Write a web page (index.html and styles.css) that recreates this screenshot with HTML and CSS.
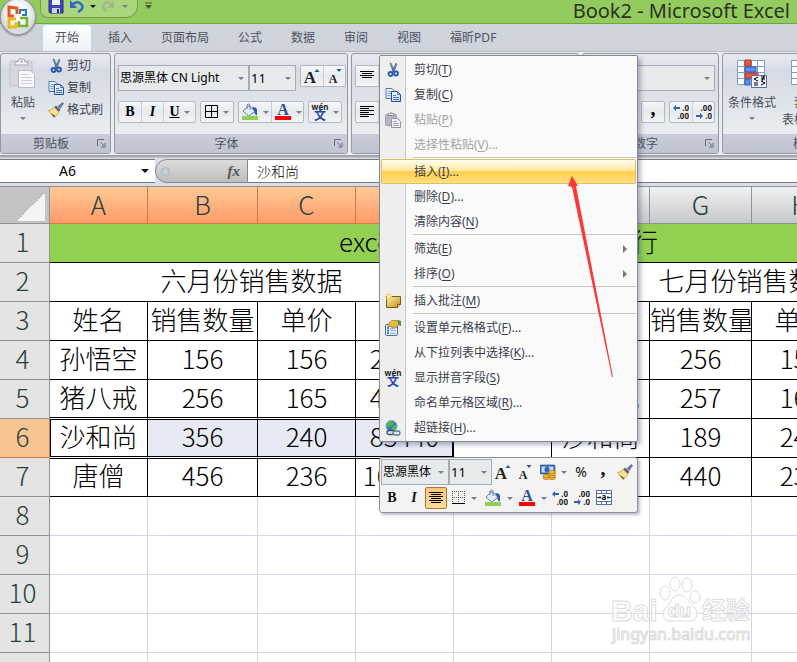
FILE: index.html
```html
<!DOCTYPE html>
<html lang="zh-CN">
<head>
  <meta charset="UTF-8">
  <title>Book2 - Microsoft Excel</title>
  <link rel="stylesheet" href="styles.css">
</head>
<body>

<svg class="gradients" width="0" height="0" aria-hidden="true">
  <linearGradient id="paper" x1="0" y1="0" x2="1" y2="1"><stop offset="0" stop-color="#fff"/><stop offset="1" stop-color="#b9cdf0"/></linearGradient>
  <linearGradient id="note" x1="0" y1="0" x2="1" y2="1"><stop offset="0" stop-color="#fff6b5"/><stop offset="1" stop-color="#bd8a18"/></linearGradient>
</svg>

<!-- shared icons -->
<svg class="symbols" aria-hidden="true">
  <symbol id="cut" viewBox="0 0 16 16">
    <path d="M5 1l1 0 4 9-2 0zM11 1l1 1-3 8-2-1z" fill="#6f87a3" stroke="#3c5674" stroke-width=".5"/>
    <circle cx="5.500" cy="12" r="2" fill="none" stroke="#2857b5" stroke-width="1.800"/>
    <circle cx="11" cy="11.500" r="2" fill="none" stroke="#2857b5" stroke-width="1.800"/>
  </symbol>
  <symbol id="copy" viewBox="0 0 16 16">
    <path d="M1 1.500h6l2 2v8H1z" fill="url(#paper)" stroke="#4a78c0"/>
    <path d="M2.500 4.500h4M2.500 6.500h4M2.500 8.500h3" stroke="#7fa5dc"/>
    <path d="M6.500 4.500h6l3 3v7h-9z" fill="url(#paper)" stroke="#244f9e"/>
    <path d="M12.500 4.500v3h3M8 8.500h3M8 10.500h6M8 12.500h6" fill="none" stroke="#4a78c0"/>
  </symbol>
  <symbol id="paste-gray" viewBox="0 0 16 16">
    <rect x=".5" y="2.500" width="11" height="11" rx="1" fill="#b9b4c2" stroke="#a09aab"/>
    <path d="M3 3.500h6v-2H7.500L6 .5 4.500 1.500H3z" fill="#e7e4ea" stroke="#8f8a9a"/>
    <path d="M6.500 6.500h6l3 3v6h-9z" fill="#f2f1f5" stroke="#9893a3"/>
    <path d="M8 9.500h4M8 11.500h6M8 13.500h6" stroke="#aaa6b5"/>
  </symbol>
  <symbol id="paste-big" viewBox="0 0 28 32">
    <rect x="1" y="3" width="22" height="25" rx="2" fill="#d9d6df" stroke="#c2becb"/>
    <path d="M6 7V4h3l1-3h5l1 3h3v3z" fill="#f4f3f6" stroke="#aaa6b4"/>
    <circle cx="12.500" cy="3.500" r="1.200" fill="#b4b0bd"/>
    <path d="M9.500 12.500h12l4 4v13h-16z" fill="#f8f8fb" stroke="#bcb9c9"/>
    <path d="M12 16.500h8M12 19.500h11M12 22.500h11M12 25.500h11" stroke="#cfcdd9"/>
  </symbol>
  <symbol id="brush" viewBox="0 0 16 16">
    <path d="M15.500 1.500l-1-1-4.500 4 2 2z" fill="#6b7fb0" stroke="#3a4a78" stroke-width=".6"/>
    <path d="M8 3.500l4.500 4.500-2 2L6 5.500z" fill="#5b5f78"/>
    <path d="M6 5l5 5c-1 2-3 4-5 5.500L.5 8.500C3 8 5 7 6 5z" fill="#f3dd7a" stroke="#a88b2f" stroke-width=".6"/>
    <path d="M3 9l4 4M5 7.500l4.500 4.500" stroke="#fff6c4"/>
    <path d="M6 15.500l-3.500-4.500 5 3z" fill="#7d5a14"/>
  </symbol>
  <symbol id="bucket" viewBox="0 0 18 18">
    <path d="M2 8l6-5.500 6 6-6.500 4.500z" fill="#e5edf7" stroke="#667fa0"/>
    <path d="M6 6V2q1.500-2 3 0v5" fill="none" stroke="#667fa0"/>
    <path d="M11 4q5 0 5 3v5.500q-3-1-2.500-4z" fill="#2d5aa8"/>
    <path d="M1 13h16v4H1z" fill="#92d050"/>
  </symbol>
  <symbol id="font-color" viewBox="0 0 18 18">
    <text x="9" y="12" class="glyph-a">A</text>
    <path d="M1 13h16v4H1z" fill="#f00"/>
  </symbol>
  <symbol id="wen" viewBox="0 0 18 18">
    <text x="9" y="7" class="glyph-wen">wén</text>
    <text x="9" y="17" class="glyph-zi">文</text>
  </symbol>
  <symbol id="grow" viewBox="0 0 18 18">
    <text x="7" y="16" class="glyph-grow">A</text>
    <path d="M11.500 5L14 2l2.500 3z" fill="#2a52a5"/>
  </symbol>
  <symbol id="shrink" viewBox="0 0 18 18">
    <text x="7" y="16" class="glyph-shrink">A</text>
    <path d="M10.500 2h5L13 5z" fill="#2a52a5"/>
  </symbol>
  <symbol id="borders" viewBox="0 0 14 14">
    <path d="M.5 .5h12v12H.5zM6.500 .5v12M.5 6.500h12" fill="none" stroke="#000"/>
  </symbol>
  <symbol id="bottom-border" viewBox="0 0 14 14">
    <path d="M0 .5h13M0 6.500h13M.5 0v12M6.500 0v12M12.500 0v12" fill="none" stroke="#555" stroke-dasharray="1 1"/>
    <path d="M0 12.500h13" stroke="#000"/>
  </symbol>
  <symbol id="center" viewBox="0 0 14 14">
    <path d="M0 1.500h14M2 3.500h10M0 5.500h14M2 7.500h10M0 9.500h14M2 11.500h10" stroke="#000"/>
  </symbol>
  <symbol id="top" viewBox="0 0 14 14">
    <path d="M0 2.500h14M2 4.500h10M0 6.500h14M2 8.500h10" stroke="#000"/>
  </symbol>
  <symbol id="left" viewBox="0 0 14 14">
    <path d="M0 1.500h14M0 3.500h9M0 5.500h14M0 7.500h9M0 9.500h14M0 11.500h9" stroke="#000"/>
  </symbol>
  <symbol id="dec-more" viewBox="0 0 16 16">
    <path d="M0 4l3-3v2h4v2H3v2z" fill="#2d63c8"/>
    <text x="16" y="7" class="glyph-dec">.0</text><text x="16" y="15" class="glyph-dec">.00</text>
  </symbol>
  <symbol id="dec-less" viewBox="0 0 16 16">
    <path d="M7 12l-3-3v2H0v2h4v2z" fill="#2d63c8"/>
    <text x="16" y="7" class="glyph-dec">.00</text><text x="16" y="15" class="glyph-dec">.0</text>
  </symbol>
  <symbol id="merge" viewBox="0 0 16 16">
    <rect x=".5" y=".5" width="15" height="14" fill="#fff" stroke="#5272a8"/>
    <path d="M1 3.500h14M5.500 1v3M10.500 1v3M1 11.500h14M5.500 11v4M10.500 11v4" stroke="#5272a8"/>
    <path d="M1 7.500h4M11 7.500h4M4 6v3M12 6v3" stroke="#234"/>
    <text x="8" y="10" class="glyph-merge">a</text>
  </symbol>
  <symbol id="currency" viewBox="0 0 16 16">
    <rect x="0" y="1" width="15" height="9" rx="1" fill="#3465b4" stroke="#21488e" stroke-width=".6"/>
    <rect x="1.500" y="2.500" width="12" height="6" fill="#c9dcf6"/><ellipse cx="7" cy="5.500" rx="2.500" ry="3" fill="#3465b4"/>
    <g fill="#f6c33c" stroke="#a66e0b" stroke-width=".7"><ellipse cx="12" cy="14" rx="3.500" ry="1.500"/><ellipse cx="12" cy="12" rx="3.500" ry="1.500"/><ellipse cx="12" cy="10" rx="3.500" ry="1.500"/><ellipse cx="12" cy="8" rx="3.500" ry="1.500"/><ellipse cx="6" cy="14" rx="3" ry="1.500"/><ellipse cx="6" cy="12" rx="3" ry="1.500"/></g>
  </symbol>
  <symbol id="comment" viewBox="0 0 16 16">
    <path d="M1.500 3.500h14v8l-3 3h-11z" fill="url(#note)" stroke="#7b5b10"/>
    <path d="M12.500 14.500l0-3 3 0" fill="#f7e28a" stroke="#7b5b10"/>
    <path d="M3.500 0v7M0 3.500h7M1 1l5 5M6 1L1 6" stroke="#f2c522"/><circle cx="3.500" cy="3.500" r="1.500" fill="#fffbd0"/>
  </symbol>
  <symbol id="format" viewBox="0 0 16 16">
    <rect x=".5" y="4.500" width="12" height="11" rx="1" fill="#e4edfa" stroke="#4c6d9e"/>
    <path d="M2 8h2M2 10.500h2M2 13h2" stroke="#2c5cb0" stroke-width="1.500"/><path d="M5 8.500h5M5 10.500h6M5 13.500h6" stroke="#9aaecb"/>
    <path d="M3 4l4-3.500h6l1 4-3 3.500-2-1-2 1-1-2-3 1z" fill="#e7b84c" stroke="#8c6518" stroke-width=".6"/>
    <path d="M13 0l3 1v5l-2.500-1z" fill="#4f8f4a"/>
  </symbol>
  <symbol id="link" viewBox="0 0 16 16">
    <circle cx="6.500" cy="6" r="5.500" fill="#3577cf" stroke="#8ea6c4"/>
    <path d="M3 2q3-2 5 0t-2 4-3 2-2-3zM8 6q3-2 4 0t-3 4-2-2z" fill="#4dbb45"/>
    <rect x="2" y="10.500" width="7" height="4" rx="2" fill="#dfe8f2" stroke="#33506f" stroke-width="1.300"/>
    <rect x="8" y="11" width="7" height="4" rx="2" fill="#dfe8f2" stroke="#5a7899" stroke-width="1.300"/>
  </symbol>
  <symbol id="cond" viewBox="0 0 30 28">
    <path d="M.5.500h27v24H.5z" fill="#fff" stroke="#7f9cc8"/>
    <path d="M7.500 1v24M14.500 1v24M20.500 1v24M1 6.500h27M1 12.500h27M1 18.500h27" stroke="#7f9cc8"/>
    <path d="M8 0h6v6H8zM8 13h13v5H8z" fill="#f2543d" stroke="#bd3424"/><path d="M8 7h11v5H8zM8 19h5v6H8z" fill="#5b8ff0" stroke="#2e57b5"/>
    <path d="M14.500 15.500h15v12h-15z" fill="#edf3fc" stroke="#5b7294"/>
    <path d="M21 17l-4 2 4 2M17 23h4M17 25h4M24 19h4M24 17h4M27 16l-2 5M24 21l4 2-4 2" fill="none" stroke="#000"/>
  </symbol>
  <symbol id="launcher" viewBox="0 0 9 9">
    <path d="M.5 7V.5H7M3.500 3.500l4 4M8 4v4H4" fill="none" stroke="#666d7a"/>
  </symbol>
</svg>

<div class="app">

  <header class="titlebar">
    <div class="quick-access">
      <button class="qa-btn" aria-label="保存">
        <svg width="16" height="16" viewBox="0 0 16 16"><path d="M1 0h13l1 1v13H2l-1-1z" fill="#3b46b5" stroke="#222c80"/><path d="M4 0h8v6H4z" fill="#eef1fb"/><path d="M4 9h8v5H4z" fill="#cfd4e6"/><path d="M9 10h2v4H9z" fill="#28318a"/></svg>
      </button>
      <button class="qa-btn" aria-label="撤消">
        <svg width="16" height="16" viewBox="0 0 16 16"><path d="M3 6q5-5 9-1t-3 8" fill="none" stroke="#3568c4" stroke-width="2.500"/><path d="M1 1v8h7z" fill="#3568c4"/></svg>
      </button>
      <i class="arrow dark"></i>
      <button class="qa-btn" aria-label="恢复">
        <svg width="16" height="16" viewBox="0 0 16 16"><path d="M11 6Q6 1 3 5t3 7" fill="none" stroke="#9fb98e" stroke-width="2.500"/><path d="M13 1v8H6z" fill="#9fb98e"/></svg>
      </button>
      <i class="arrow"></i>
    </div>
    <svg class="qa-more" width="7" height="8" viewBox="0 0 7 8"><path d="M0 1h7" stroke="#4a5a3c"/><path d="M0 3h7L3.500 7z" fill="#4a5a3c"/></svg>
    <h1>Book2 - Microsoft Excel</h1>
  </header>

  <button class="office-button" aria-label="Office 按钮">
    <svg width="24" height="24" viewBox="0 0 24 24" fill="none" stroke-width="3">
      <path d="M11 9V3L3 2v9h5" stroke="#e8571c"/><path d="M14 9V5h6v5h-4" stroke="#3277c8" stroke-width="2"/>
      <path d="M10 14H3v8h7v-5" stroke="#f2b51c"/><path d="M14 13h7v8h-8v-5" stroke="#72b62c" stroke-width="2.500"/>
    </svg>
  </button>

  <nav class="tabs">
    <button class="tab active">开始</button>
    <button class="tab">插入</button>
    <button class="tab">页面布局</button>
    <button class="tab">公式</button>
    <button class="tab">数据</button>
    <button class="tab">审阅</button>
    <button class="tab">视图</button>
    <button class="tab">福昕PDF</button>
  </nav>

  <div class="ribbon">
    <section class="group clipboard">
      <div class="group-body">
        <button class="big-btn"><svg width="28" height="32"><use href="#paste-big"/></svg>粘贴<i class="arrow"></i></button>
        <div class="small-btns">
          <button><svg width="16" height="16"><use href="#cut"/></svg>剪切</button>
          <button><svg width="16" height="16"><use href="#copy"/></svg>复制</button>
          <button><svg width="16" height="16"><use href="#brush"/></svg>格式刷</button>
        </div>
      </div>
      <div class="group-label"><span>剪贴板</span><svg width="9" height="9"><use href="#launcher"/></svg></div>
    </section>

    <section class="group font">
      <div class="group-body rows">
        <div class="row">
          <div class="combos">
            <span class="combo name"><select aria-label="字体"><option>思源黑体 CN Light</option></select></span>
            <span class="combo size"><select aria-label="字号"><option>11</option></select></span>
          </div>
          <div class="btn-set">
            <button aria-label="增大字号"><svg width="18" height="18"><use href="#grow"/></svg></button>
            <button aria-label="减小字号"><svg width="18" height="18"><use href="#shrink"/></svg></button>
          </div>
        </div>
        <div class="row">
          <div class="btn-set">
            <button class="b">B</button>
            <button class="i">I</button>
            <button class="u wide"><u>U</u><i class="arrow"></i></button>
          </div>
          <div class="btn-set">
            <button class="wide" aria-label="边框"><svg width="14" height="14"><use href="#borders"/></svg><i class="arrow"></i></button>
          </div>
          <div class="btn-set">
            <button class="wide" aria-label="填充颜色"><svg width="18" height="18"><use href="#bucket"/></svg><i class="arrow"></i></button>
            <button class="wide" aria-label="字体颜色"><svg width="18" height="18"><use href="#font-color"/></svg><i class="arrow"></i></button>
          </div>
          <div class="btn-set">
            <button class="wide" aria-label="拼音"><svg width="18" height="18"><use href="#wen"/></svg><i class="arrow"></i></button>
          </div>
        </div>
      </div>
      <div class="group-label"><span>字体</span><svg width="9" height="9"><use href="#launcher"/></svg></div>
    </section>

    <section class="group align">
      <div class="group-body rows">
        <div class="row">
          <div class="btn-set"><button aria-label="顶端对齐"><svg width="14" height="14"><use href="#top"/></svg></button><button class="on" aria-label="垂直居中"><svg width="14" height="14"><use href="#top"/></svg></button></div>
        </div>
        <div class="row">
          <div class="btn-set"><button aria-label="左对齐"><svg width="14" height="14"><use href="#left"/></svg></button><button class="on" aria-label="居中"><svg width="14" height="14"><use href="#center"/></svg></button></div>
        </div>
      </div>
      <div class="group-label"></div>
    </section>

    <section class="group number">
      <div class="group-body rows">
        <div class="row">
          <span class="combo format"><select aria-label="数字格式"><option></option></select></span>
        </div>
        <div class="row end">
          <div class="btn-set"><button class="comma">,</button></div>
          <div class="btn-set">
            <button aria-label="增加小数位数"><svg width="16" height="16"><use href="#dec-more"/></svg></button>
            <button aria-label="减少小数位数"><svg width="16" height="16"><use href="#dec-less"/></svg></button>
          </div>
        </div>
      </div>
      <div class="group-label"><span>数字</span><svg width="9" height="9"><use href="#launcher"/></svg></div>
    </section>

    <section class="group style">
      <div class="group-body">
        <button class="big-btn"><svg width="30" height="32"><use href="#cond"/></svg>条件格式<i class="arrow"></i></button>
        <button class="big-btn"><svg width="30" height="32"><use href="#cond"/></svg>套用<br>表格格式</button>
      </div>
      <div class="group-label"><span>样式</span></div>
    </section>
  </div>

  <div class="formula-bar">
    <div class="name-box"><input type="text" value="A6" aria-label="名称框"><i class="arrow dark"></i></div>
    <div class="fx"><i class="knob"></i><button>fx</button></div>
    <input class="formula" type="text" value="沙和尚" aria-label="编辑栏">
  </div>

  <main class="sheet">
    <table>
      <colgroup><col class="c-head"><col class="c"><col class="c-b"><col class="c"><col class="c"><col class="c"><col class="c"><col class="c-g"><col class="c"><col class="c"></colgroup>
      <thead>
        <tr><th class="corner"></th><th class="sel">A</th><th class="sel">B</th><th class="sel">C</th><th class="sel">D</th><th>E</th><th>F</th><th>G</th><th>H</th><th>I</th></tr>
      </thead>
      <tbody>
        <tr class="data"><th>1</th><td colspan="9" class="title">excel中如何快速插入一整行</td></tr>
        <tr class="data"><th>2</th><td colspan="4">六月份销售数据</td><td></td><td colspan="4">七月份销售数据</td></tr>
        <tr class="data"><th>3</th><td>姓名</td><td>销售数量</td><td>单价</td><td>总价</td><td></td><td>姓名</td><td>销售数量</td><td>单价</td><td>总价</td></tr>
        <tr class="data"><th>4</th><td>孙悟空</td><td>156</td><td>156</td><td>24336</td><td></td><td>孙悟空</td><td>256</td><td>156</td><td>39936</td></tr>
        <tr class="data before"><th>5</th><td>猪八戒</td><td>256</td><td>165</td><td>42240</td><td></td><td>猪八戒</td><td>257</td><td>165</td><td>42405</td></tr>
        <tr class="data current"><th>6</th><td class="active">沙和尚</td><td class="picked">356</td><td class="picked">240</td><td class="picked last">85440</td><td></td><td>沙和尚</td><td>189</td><td>240</td><td>45360</td></tr>
        <tr class="data after"><th>7</th><td>唐僧</td><td>456</td><td>236</td><td>107616</td><td></td><td>唐僧</td><td>440</td><td>236</td><td>103840</td></tr>
        <tr><th>8</th><td></td><td></td><td></td><td></td><td></td><td></td><td></td><td></td><td></td></tr>
        <tr><th>9</th><td></td><td></td><td></td><td></td><td></td><td></td><td></td><td></td><td></td></tr>
        <tr><th>10</th><td></td><td></td><td></td><td></td><td></td><td></td><td></td><td></td><td></td></tr>
        <tr><th>11</th><td></td><td></td><td></td><td></td><td></td><td></td><td></td><td></td><td></td></tr>
        <tr><th></th><td></td><td></td><td></td><td></td><td></td><td></td><td></td><td></td><td></td></tr>
      </tbody>
    </table>
  </main>

  <!-- right click menu -->
  <div class="context-menu">
    <button><span class="ico"><svg width="16" height="16"><use href="#cut"/></svg></span>剪切(<u>T</u>)</button>
    <button><span class="ico"><svg width="16" height="16"><use href="#copy"/></svg></span>复制(<u>C</u>)</button>
    <button disabled><span class="ico"><svg width="16" height="16"><use href="#paste-gray"/></svg></span>粘贴(<u>P</u>)</button>
    <button disabled><span class="ico"></span>选择性粘贴(<u>V</u>)...</button>
    <hr>
    <button class="hot"><span class="ico"></span>插入(<u>I</u>)...</button>
    <button><span class="ico"></span>删除(<u>D</u>)...</button>
    <button><span class="ico"></span>清除内容(<u>N</u>)</button>
    <hr>
    <button class="sub"><span class="ico"></span>筛选(<u>E</u>)</button>
    <button class="sub"><span class="ico"></span>排序(<u>O</u>)</button>
    <hr>
    <button><span class="ico"><svg width="16" height="16"><use href="#comment"/></svg></span>插入批注(<u>M</u>)</button>
    <hr>
    <button><span class="ico"><svg width="16" height="16"><use href="#format"/></svg></span>设置单元格格式(<u>F</u>)...</button>
    <button><span class="ico"></span>从下拉列表中选择(<u>K</u>)...</button>
    <button><span class="ico"><svg width="18" height="18"><use href="#wen"/></svg></span>显示拼音字段(<u>S</u>)</button>
    <button><span class="ico"></span>命名单元格区域(<u>R</u>)...</button>
    <button><span class="ico"><svg width="16" height="16"><use href="#link"/></svg></span>超链接(<u>H</u>)...</button>
  </div>

  <!-- floating format bar -->
  <div class="mini-bar">
    <div class="mini-row">
      <div class="combos">
        <span class="combo mini-name"><select aria-label="字体"><option>思源黑体</option></select></span>
        <span class="combo mini-size"><select aria-label="字号"><option>11</option></select></span>
      </div>
      <button aria-label="增大字号"><svg width="18" height="18"><use href="#grow"/></svg></button>
      <button aria-label="减小字号"><svg width="18" height="18"><use href="#shrink"/></svg></button>
      <button class="wide" aria-label="会计数字格式"><svg width="16" height="16"><use href="#currency"/></svg><i class="arrow"></i></button>
      <button class="percent">%</button>
      <button class="comma">,</button>
      <button aria-label="格式刷"><svg width="16" height="16"><use href="#brush"/></svg></button>
    </div>
    <div class="mini-row">
      <button class="b">B</button>
      <button class="i">I</button>
      <button class="on" aria-label="居中"><svg width="14" height="14"><use href="#center"/></svg></button>
      <button class="wide" aria-label="边框"><svg width="14" height="14"><use href="#bottom-border"/></svg><i class="arrow"></i></button>
      <button class="wide" aria-label="填充颜色"><svg width="18" height="18"><use href="#bucket"/></svg><i class="arrow"></i></button>
      <button class="wide" aria-label="字体颜色"><svg width="18" height="18"><use href="#font-color"/></svg><i class="arrow"></i></button>
      <button aria-label="增加小数位数"><svg width="16" height="16"><use href="#dec-more"/></svg></button>
      <button aria-label="减少小数位数"><svg width="16" height="16"><use href="#dec-less"/></svg></button>
      <button aria-label="合并后居中"><svg width="16" height="16"><use href="#merge"/></svg></button>
    </div>
  </div>

  <svg class="pointer" width="46" height="202" viewBox="0 0 46 202"><path d="M4 0L10 10 8 10 45 201 44 201 4 11 0 10z" fill="#f93a37"/></svg>

  <svg class="watermark" width="150" height="70" viewBox="0 0 150 70">
    <g fill="#fff" fill-opacity=".7" stroke="#dcdcdc">
      <text x="0" y="45" class="wm-big">Bai</text>
      <ellipse cx="54" cy="17" rx="5" ry="7"/><ellipse cx="64" cy="8" rx="5" ry="7"/><ellipse cx="76" cy="9" rx="5" ry="7"/><ellipse cx="84" cy="21" rx="5" ry="6"/>
      <path d="M68 19q7 0 11 8 8 6 7 12-2 7-10 6H60q-8 0-8-7 0-5 6-10 4-9 10-9z"/>
      <text x="57" y="41" class="wm-du">du</text>
      <text x="91" y="43" class="wm-cn">经验</text>
      <text x="1" y="64" class="wm-url">jingyan.baidu.com</text>
    </g>
  </svg>

</div>

</body>
</html>
```
FILE: styles.css
```css
* {
	box-sizing: border-box;
}

body {
	margin: 0;
	background: #fff;
	color: #3b3f4c;
	font-family: "Noto Sans", "Noto Sans CJK SC", sans-serif;
	font-size: 12px;
	line-height: 16px;
}

button, input, select {
	font: inherit;
	color: inherit;
	border: 0;
	margin: 0;
	padding: 0;
	background: none;
}

svg {
	display: block;
	flex: none;
}

.gradients {
	position: absolute;
}

.symbols {
	display: none;
}

.app {
	position: relative;
	height: 100vh;
	overflow: hidden;
	display: flex;
	flex-direction: column;
	background: #cfd3dc;
}

/* small drop down triangle */
.arrow {
	flex: none;
	width: 0;
	height: 0;
	border: 3px solid transparent;
	border-top-color: #777d86;
	border-bottom: 0;
}

.arrow.dark {
	border-width: 4px 4px 0;
	border-top-color: #111;
}

/* Title bar */
.titlebar {
	flex: none;
	display: flex;
	height: 24px;
	background: #94cb5f;
	border-bottom: 1px solid #6fa53e;
}

.quick-access {
	display: flex;
	align-items: center;
	gap: 5px;
	width: 98px;
	height: 18px;
	margin-left: 40px;
	padding: 0 7px 4px;
	background: #a9d67d;
	border: 1px solid #739e4d;
	border-top: 0;
	border-radius: 0 0 12px 8px;
}

.quick-access .arrow {
	border-width: 3px 3px 0;
}

.qa-more {
	margin: 2px 7px;
}

.titlebar h1 {
	margin: 0 7px 0 auto;
	font-size: 20px;
	line-height: 21px;
	font-weight: 400;
	white-space: nowrap;
	color: #29331f;
}

/* Office button lies over title bar and tabs */
.office-button {
	position: absolute;
	left: 0;
	top: -2px;
	z-index: 2;
	width: 36px;
	height: 37px;
	display: flex;
	align-items: center;
	justify-content: center;
	border: 1px solid #8d939b;
	border-radius: 50%;
	background: radial-gradient(circle at 50% 40%, #fff 30%, #d5d8dc 65%, #f5f6f7);
	box-shadow: 0 1px 2px #777;
}

/* Tabs */
.tabs {
	flex: none;
	display: flex;
	align-items: flex-end;
	gap: 5px;
	height: 27px;
	padding-left: 43px;
}

.tab {
	height: 26px;
	padding: 0 12px;
	white-space: nowrap;
	color: #4d525d;
}

.tab.active {
	background: linear-gradient(#fff, #edf1f7);
	border-radius: 3px 3px 0 0;
	box-shadow: 0 0 0 1px #abe0e4;
}

/* Ribbon */
.ribbon {
	flex: none;
	display: flex;
	gap: 3px;
	height: 105px;
	padding: 1px 0;
	overflow: hidden;
	background: #e9edf2;
	border-top: 1px solid #b5bac2;
	border-bottom: 1px solid #9ca1a8;
}

.group {
	flex: none;
	display: flex;
	flex-direction: column;
	height: 101px;
	overflow: hidden;
	border: 1px solid #93979e;
	border-radius: 3px;
	background: linear-gradient(#e7eaf0 0, #dbdfe8 14px, #d4d9e3 15px, #e9eef1 80px);
}

.clipboard {
	width: 111px;
}

.font {
	width: 234px;
}

.align {
	width: 228px;
}

.number {
	width: 137px;
}

.style {
	width: 166px;
}

.group-body {
	flex: 1;
	display: flex;
	padding: 0 4px;
}

.group-label {
	display: flex;
	align-items: center;
	height: 19px;
	padding: 0 4px;
	background: linear-gradient(#c9cdd9, #bfc4d1);
	color: #4d525d;
}

.group-label span {
	flex: 1;
	text-align: center;
}

.big-btn {
	display: flex;
	flex-direction: column;
	align-items: center;
	padding: 4px 0 0;
	line-height: 17px;
	white-space: nowrap;
	color: #474b56;
}

.clipboard .big-btn {
	width: 36px;
}

.style .big-btn {
	width: 50px;
}

.style .group-body {
	gap: 4px;
}

.big-btn svg {
	margin-bottom: 4px;
}

.big-btn .arrow {
	margin-top: 6px;
}

.small-btns {
	display: flex;
	flex-direction: column;
	padding: 1px 0 0 7px;
}

.small-btns button {
	display: flex;
	align-items: center;
	gap: 3px;
	height: 22px;
	white-space: nowrap;
}

.group-body.rows {
	flex-direction: column;
	gap: 10px;
	padding: 11px 3px 0;
}

.row {
	display: flex;
	align-items: flex-start;
	gap: 4px;
	height: 26px;
}

.row.end {
	justify-content: flex-end;
}

.combos {
	display: flex;
}

.combo {
	position: relative;
	height: 26px;
	border: 1px solid #a3adb6;
	background: #e6eaeb;
	color: #000;
}

.combo::after {
	content: "";
	position: absolute;
	right: 4px;
	top: 11px;
	border: 3px solid transparent;
	border-top-color: #777d86;
	border-bottom: 0;
}

.combo select {
	appearance: none;
	width: 100%;
	height: 100%;
	padding-left: 1px;
	outline: 0;
}

.combo.name {
	width: 131px;
}

.combo.size {
	width: 47px;
}

.combo.size select, .combo.mini-size select {
	font-size: 13px;
}

.combo.format {
	width: 100%;
}

.btn-set {
	display: flex;
	height: 22px;
	border: 1px solid #b4b9c0;
	border-radius: 2px;
	background: linear-gradient(#f4f6f8, #e8ebee 50%, #f2f4f5);
}

.btn-set button {
	display: flex;
	align-items: center;
	justify-content: center;
	gap: 4px;
	width: 22px;
	color: #000;
}

.btn-set button + button {
	border-left: 1px solid #c9cdd2;
}

.btn-set button.wide {
	width: 32px;
}

.b, .i, .u {
	font-family: "Liberation Serif", serif;
	font-size: 14px;
	font-weight: 700;
}

.i {
	font-style: italic;
}

.btn-set button.on {
	background: #fbc567;
}

button.comma {
	font-family: "Liberation Serif", serif;
	font-size: 20px;
	font-weight: 700;
	line-height: 12px;
	padding-bottom: 8px;
}

.percent {
	font-size: 14px;
}

/* Letters inside the icons */
.glyph-a, .glyph-grow, .glyph-shrink {
	font-family: "Liberation Serif", serif;
	font-weight: 700;
	text-anchor: middle;
}

.glyph-a {
	font-size: 16px;
	fill: #2f508f;
}

.glyph-grow {
	font-size: 17px;
	fill: #222;
}

.glyph-shrink {
	font-size: 12px;
	fill: #222;
}

.glyph-wen {
	font-size: 8px;
	font-weight: 700;
	text-anchor: middle;
	fill: #222;
}

.glyph-zi {
	font-size: 12px;
	font-weight: 700;
	text-anchor: middle;
	fill: #2846b0;
}

.glyph-dec {
	font-size: 8px;
	font-weight: 700;
	text-anchor: end;
	fill: #222;
}

.glyph-merge {
	font-size: 8px;
	font-weight: 700;
	text-anchor: middle;
	fill: #000;
}

/* Formula bar */
.formula-bar {
	flex: none;
	display: flex;
	height: 31px;
	padding: 3px 0 3px;
	background: linear-gradient(#a9adb2 1px, #d9dde5 2px);
	border-bottom: 1px solid #8e9196;
}

.name-box {
	display: flex;
	align-items: center;
	width: 155px;
	padding-right: 6px;
	background: #fff;
	border: 1px solid #777b80;
	border-width: 1px 0;
}

.name-box input {
	flex: 1;
	min-width: 0;
	padding-right: 6px;
	text-align: center;
	font-size: 14px;
	color: #000;
}

.fx {
	display: flex;
	align-items: center;
	justify-content: space-between;
	width: 93px;
	padding: 0 7px 0 5px;
	border: 1px solid #85898e;
	border-radius: 12px 0 0 12px;
	background: linear-gradient(#dcdcdc, #bdbdbd);
}

.knob {
	width: 9px;
	height: 9px;
	border-radius: 50%;
	background: radial-gradient(#d5dbe2, #a2a8b0);
}

.fx button {
	font-family: "Liberation Serif", serif;
	font-size: 15px;
	font-style: italic;
	font-weight: 700;
	color: #555;
}

.formula {
	flex: 1;
	min-width: 0;
	padding-left: 9px;
	background: #fff;
	border: 1px solid #777b80;
	border-width: 1px 0;
	font-size: 14px;
	font-family: "Noto Sans CJK SC", sans-serif;
	font-weight: 300;
	color: #000;
}

/* Sheet */
.sheet {
	flex: 1;
	min-height: 0;
	overflow: hidden;
	background: #fff;
}

table {
	table-layout: fixed;
	width: 948px;
	border-collapse: separate;
	border-spacing: 0;
	font-family: "Noto Sans CJK SC", sans-serif;
	font-size: 26px;
	font-weight: 200;
	line-height: 34px;
	color: #000;
}

.c-head {
	width: 50px;
}

.c {
	width: 98px;
}

.c-b {
	width: 110px;
}

.c-g {
	width: 102px;
}

th, td {
	height: 39px;
	padding: 0 0 4px;
	overflow: hidden;
	white-space: nowrap;
	text-align: center;
	font-weight: 200;
	border-right: 1px solid #d0d7e5;
	border-bottom: 1px solid #d0d7e5;
}

th {
	color: #27413e;
	background: #e4e4e4;
	border-color: #8f9296;
}

tbody th {
	padding-right: 4px;
}

thead th {
	height: 37px;
	padding: 0 0 2px;
	background: linear-gradient(#f0f1f2, #c5c7ca);
}

thead .sel {
	background: linear-gradient(#fdca96, #ff9b69);
	border-color: #d37a43;
}

thead .corner {
	background: linear-gradient(135deg, transparent 50%, #f4f4f4 50%) 17px 6px / 28px 28px no-repeat #c3c3c3;
}

.data td {
	border-color: #000;
}

.data .title {
	background: #92d050;
}

/* the selected row has a double line above and below */
.before td:nth-child(-n+5) {
	border-bottom-color: #fff;
	box-shadow: inset 0 -1px #000;
}

.current th {
	background: #f6c592;
	border-color: #d37a43;
}

.current .active, .current .picked {
	border-bottom-color: #fff;
	box-shadow: inset 0 1px #000, inset 0 -1px #000;
}

.current .active {
	box-shadow: inset 0 1px #000, inset 0 -1px #000, inset 1px 0 #000;
}

.current .picked {
	background: #e7eaf4;
}

.current .last {
	box-shadow: inset 0 1px #000, inset 0 -1px #000, inset -1px 0 #000;
}

.after td:nth-child(-n+5) {
	box-shadow: inset 0 1px #000;
}

/* Context menu */
.context-menu {
	position: absolute;
	left: 379px;
	top: 55px;
	z-index: 3;
	width: 259px;
	padding: 1px;
	display: flex;
	flex-direction: column;
	border: 1px solid #86898d;
	border-radius: 2px;
	background: linear-gradient(90deg, #eee 25px, #c5c5c5 25px, #c5c5c5 26px, #fafafa 26px);
	box-shadow: 3px 3px 4px rgba(60, 60, 110, .35);
}

.context-menu button {
	display: flex;
	align-items: center;
	height: 25px;
	padding-right: 8px;
	border: 1px solid transparent;
	white-space: nowrap;
}

.context-menu button:disabled {
	color: #a3a3a3;
}

.context-menu u {
	text-underline-offset: 2px;
}

.ico {
	display: flex;
	justify-content: center;
	width: 22px;
	margin-right: 10px;
}

.context-menu .hot {
	border-color: #d9c06a;
	border-radius: 2px;
	background: linear-gradient(#fffdf0, #ffe79a 48%, #ffd04f 50%, #ffdf7d);
}

.context-menu .sub::after {
	content: "";
	margin-left: auto;
	border: 4px solid transparent;
	border-left-color: #777;
	border-right: 0;
}

.context-menu hr {
	width: 223px;
	height: 2px;
	margin: 0 0 0 auto;
	border: 0;
	border-top: 1px solid #c5c5c5;
}

/* Floating format bar */
.mini-bar {
	position: absolute;
	left: 379px;
	top: 457px;
	z-index: 3;
	width: 259px;
	padding: 1px;
	border: 1px solid #8d9095;
	border-radius: 3px;
	background: #f3f3f3;
	box-shadow: 2px 2px 3px rgba(60, 60, 110, .35);
}

.mini-row {
	display: flex;
	align-items: center;
	height: 26px;
}

.mini-row button {
	display: flex;
	align-items: center;
	justify-content: center;
	gap: 5px;
	width: 22px;
	height: 22px;
	color: #111;
}

.mini-row button.wide {
	width: 34px;
}

.mini-row button.on {
	border: 1px solid #a57b3c;
	border-radius: 2px;
	background: linear-gradient(#fbc67c, #ffdb94);
}

.combo.mini-name {
	width: 68px;
}

.combo.mini-size {
	width: 43px;
}

/* red arrow that points at the insert command */
.pointer {
	position: absolute;
	left: 568px;
	top: 176px;
	z-index: 4;
}

.watermark {
	position: absolute;
	left: 611px;
	top: 576px;
	overflow: visible;
}

.wm-big {
	font: 700 30px "Liberation Sans", sans-serif;
}

.wm-du {
	font: 700 19px "Liberation Sans", sans-serif;
}

.wm-cn {
	font: 700 24px "Noto Sans CJK SC", sans-serif;
}

.wm-url {
	font: 400 16px "Noto Sans", sans-serif;
}
```
